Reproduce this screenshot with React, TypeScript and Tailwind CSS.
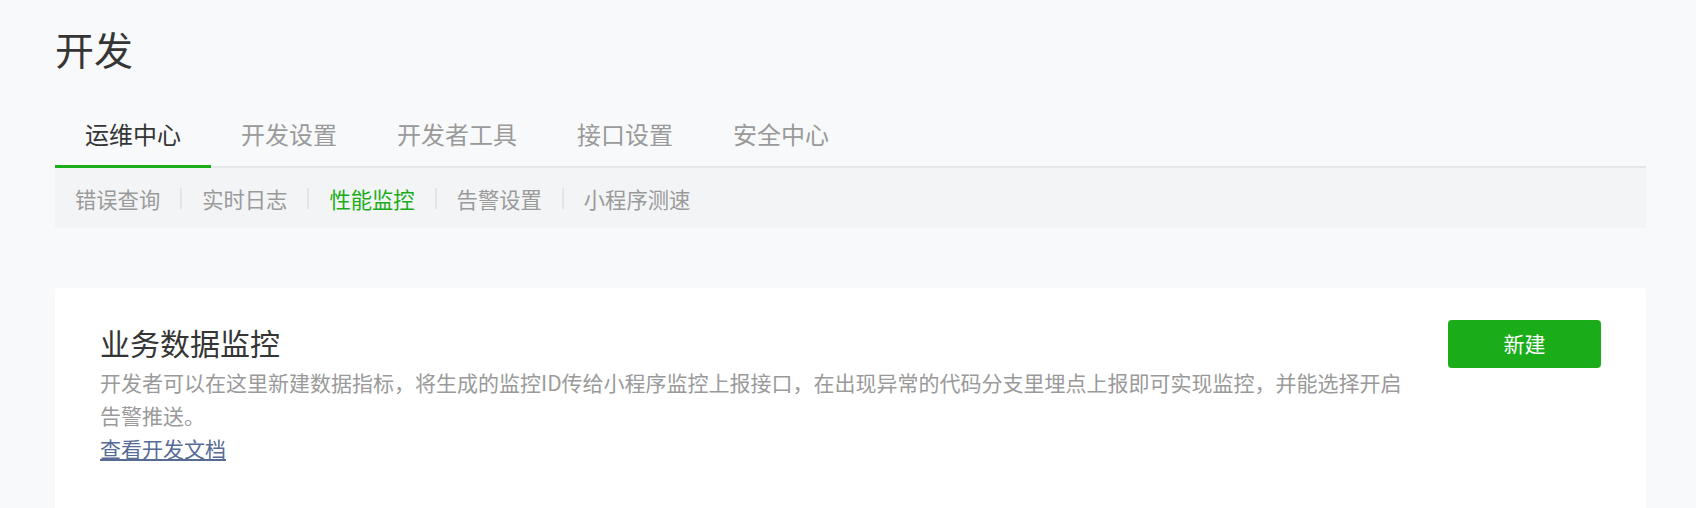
import React from "react";

const App = () => {
  const tabs = ["运维中心", "开发设置", "开发者工具", "接口设置", "安全中心"];
  const subTabs = ["错误查询", "实时日志", "性能监控", "告警设置", "小程序测速"];
  const activeTab = 0;
  const activeSub = 2;

  return (
    <div
      className="min-h-screen bg-[#f8f9fb] pl-[55px] pr-[50px] pt-[28px] text-[#353535]"
      style={{ fontFamily: '"Noto Sans CJK SC", "Noto Sans", sans-serif' }}
    >
      <h1 className="text-[39px] leading-[40px] font-normal">开发</h1>

      <div className="mt-[54px] flex border-b-2 border-[#e5e6e8]">
        {tabs.map((tab, index) => (
          <div
            key={index}
            className={
              index === activeTab
                ? "-mb-[2px] px-[30px] pb-[19px] text-[24px] leading-[24px] text-[#353535] border-b-[3px] border-[#1aad19]"
                : "-mb-[2px] px-[30px] pb-[19px] text-[24px] leading-[24px] text-[#9a9a9a] border-b-[3px] border-transparent"
            }
          >
            {tab}
          </div>
        ))}
      </div>

      <div className="flex h-[60px] items-center bg-[#f3f4f6]">
        {subTabs.map((item, index) => (
          <div
            key={index}
            className={
              (index === 0 ? "" : "border-l-2 border-[#e4e5e7] ") +
              (index === activeSub ? "text-[#1aad19]" : "text-[#9a9a9a]") +
              " px-[20px] text-[21.3px] leading-[21px]"
            }
          >
            {item}
          </div>
        ))}
      </div>

      <div className="mt-[60px] rounded-[4px] bg-white pl-[45px] pr-[45px] pt-[31px] pb-[60px]">
        <div className="flex items-start gap-[28px]">
          <div className="flex-1">
            <h2 className="mt-[-1px] text-[30px] leading-[48px] font-normal text-[#353535]">
              业务数据监控
            </h2>
            <p className="text-[21px] leading-[33px] text-[#9a9a9a]">
              开发者可以在这里新建数据指标，将生成的监控ID传给小程序监控上报接口，在出现异常的代码分支里埋点上报即可实现监控，并能选择开启告警推送。
            </p>
            <a
              href="#"
              className="block w-fit text-[21px] leading-[33px] text-[#576b95] underline"
            >
              查看开发文档
            </a>
          </div>
          <button className="mt-[1px] h-[48px] w-[153px] shrink-0 rounded-[4px] bg-[#1aad19] text-[21px] text-white">
            新建
          </button>
        </div>
      </div>
    </div>
  );
};

export default App;
